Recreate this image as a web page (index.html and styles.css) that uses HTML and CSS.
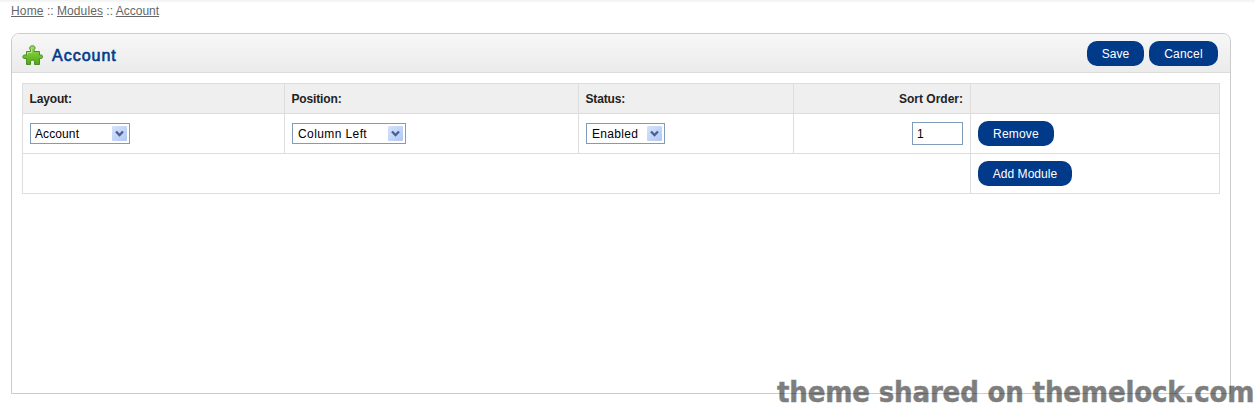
FILE: index.html
```html
<!DOCTYPE html>
<html lang="en">
<head>
<meta charset="utf-8">
<title>Account</title>
<link rel="stylesheet" href="styles.css">
</head>
<body>
<nav class="breadcrumb"><a class="home">Home</a> :: <a class="modules">Modules</a> :: <a>Account</a></nav>
<main class="box">
  <header class="heading">
    <svg class="puzzle" width="22" height="22" viewBox="0 0 22 22">
      <defs><linearGradient id="leaf" x1="0" y1="0" x2="0" y2="1"><stop offset="0" stop-color="#a5dc68"/><stop offset=".55" stop-color="#6fc02c"/><stop offset="1" stop-color="#52a51c"/></linearGradient></defs>
      <path d="M4.500 6.500H8.500V5C6.800 3.500 7.500 .8 10.500 .8S13.700 3.500 12 5V6.500H17.500V10H18.500C21.300 9.300 21.300 14.200 18.500 13.500H17.500V19.500H12.500V17C12.500 14.500 8.500 14.500 8.500 17V19.500H4.500V13.500H3C.2 14.200 .2 9.300 3 10H4.500Z" fill="url(#leaf)" stroke="#4b8e28" stroke-linejoin="round"/>
      <path d="M5.500 9.500V7.500H9.500V4" fill="none" stroke="#d0f0a8" stroke-opacity=".7"/>
    </svg>
    <h1>Account</h1>
    <div class="buttons"><a class="button save">Save</a><a class="button cancel">Cancel</a></div>
  </header>
  <div class="content">
    <table class="list">
      <colgroup><col class="c-layout"><col class="c-position"><col class="c-status"><col class="c-sort"><col></colgroup>
      <thead>
        <tr><th>Layout:</th><th>Position:</th><th>Status:</th><th class="right">Sort Order:</th><th></th></tr>
      </thead>
      <tbody>
        <tr>
          <td><div class="select s-account"><span>Account</span><i><svg width="15" height="15"><path d="M4 5.500L7.500 9L11 5.500" fill="none" stroke="#4a6190" stroke-width="2.300"/></svg></i></div></td>
          <td><div class="select s-column"><span>Column Left</span><i><svg width="15" height="15"><path d="M4 5.500L7.500 9L11 5.500" fill="none" stroke="#4a6190" stroke-width="2.300"/></svg></i></div></td>
          <td><div class="select s-enabled"><span>Enabled</span><i><svg width="15" height="15"><path d="M4 5.500L7.500 9L11 5.500" fill="none" stroke="#4a6190" stroke-width="2.300"/></svg></i></div></td>
          <td class="right"><div class="field">1</div></td>
          <td><a class="button remove">Remove</a></td>
        </tr>
        <tr><td colspan="4"></td><td><a class="button add">Add Module</a></td></tr>
      </tbody>
    </table>
  </div>
</main>
<div class="watermark">theme shared on themelock.com</div>
</body>
</html>
```
FILE: styles.css
```css
* { box-sizing: border-box; }
body {
  margin: 0;
  height: 408px;
  overflow: hidden;
  position: relative;
  background: linear-gradient(#f1f1f1, #fff 3px);
  font: 12px/14px "Liberation Sans", Arial, sans-serif;
  color: #000;
}
.breadcrumb { padding: 4px 11px 0; height: 33px; color: #666; white-space: nowrap; }
.breadcrumb a { text-decoration: underline; }
.breadcrumb .home { letter-spacing: .15px; }
.breadcrumb .modules { letter-spacing: .1px; }
.box {
  width: 1220px;
  height: 361px;
  margin-left: 11px;
  border: 1px solid #ccc;
  border-radius: 8px 8px 0 0;
}
.heading {
  display: flex;
  align-items: center;
  height: 39px;
  padding: 0 12px 0 10px;
  border-bottom: 1px solid #dbdbdb;
  border-radius: 7px 7px 0 0;
  background: linear-gradient(#f7f7f7, #ebebeb);
}
.puzzle { display: block; margin-top: 5px; }
h1 {
  margin: 5px 0 0 8px;
  font-size: 16px;
  font-weight: normal;
  line-height: 20px;
  letter-spacing: 1px;
  color: #003a88;
  -webkit-text-stroke: .6px #003a88;
}
.buttons { margin-left: auto; display: flex; gap: 5px; }
.button {
  display: flex;
  align-items: center;
  justify-content: center;
  height: 25px;
  border-radius: 10px;
  background: #003a88;
  color: #fff;
  letter-spacing: .2px;
}
.buttons .button { padding-top: 1px; }
.save { width: 57px; letter-spacing: 0; }
.cancel { width: 69px; }
.remove { width: 76px; }
.add { width: 94px; letter-spacing: .05px; }
.content { padding: 10px; }
.list { width: 1198px; table-layout: fixed; border-collapse: collapse; }
.c-layout { width: 262px; }
.c-position { width: 294px; }
.c-status { width: 215px; }
.c-sort { width: 177px; }
th, td { border: 1px solid #ddd; padding: 0 7px; text-align: left; }
th { height: 30px; padding: 0 7px 0 6.500px; background: #efefef; color: #222; letter-spacing: -.15px; }
th.right { letter-spacing: 0; }
td { height: 40px; }
.right { text-align: right; }
.select {
  display: flex;
  align-items: center;
  justify-content: space-between;
  height: 21px;
  padding: 0 2px 0 5px;
  border: 1px solid #7f9db9;
  background: #fff;
}
.select i {
  display: block;
  width: 15px;
  height: 15px;
  border-radius: 1px;
  background: linear-gradient(135deg, #d6e2fd, #b0c8f5);
}
.select svg { display: block; }
.s-account { width: 100px; padding-left: 4px; letter-spacing: .1px; }
.s-column { width: 114px; letter-spacing: .4px; }
.s-enabled { width: 79px; letter-spacing: .3px; }
.field {
  width: 51px;
  height: 23px;
  margin-left: auto;
  padding: 4px;
  border: 1px solid #7f9db9;
  text-align: left;
}
.watermark {
  position: absolute;
  left: 777px;
  top: 375px;
  font: bold 29px/34px "DejaVu Sans Condensed", "DejaVu Sans", sans-serif;
  font-stretch: condensed;
  color: #000;
  opacity: .5;
  -webkit-text-stroke: .5px #000;
  white-space: nowrap;
  letter-spacing: -.17px;
}
```
